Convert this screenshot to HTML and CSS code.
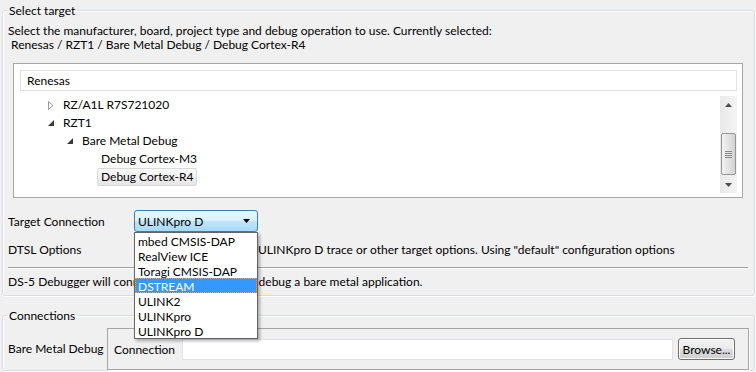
FILE: index.html
```html
<!DOCTYPE html>
<html lang="en">
<head>
  <meta charset="UTF-8" />
  <title>Debug Configuration - Connection</title>
  <link rel="stylesheet" href="styles.css">
</head>
<body>
  <fieldset class="group target">
    <legend>Select target</legend>
    <p>Select the manufacturer, board, project type and debug operation to use. Currently selected:</p>
    <p class="current">&nbsp;Renesas / RZT1 / Bare Metal Debug / Debug Cortex-R4</p>

    <div class="tree-box">
      <div class="filter">Renesas</div>
      <div class="tree-area">
        <ul class="tree">
          <li class="lvl1">
            <span class="twisty">
              <svg width="6" height="9" viewBox="0 0 6 9"><path d="M0.5 0.5 L5 4.5 L0.5 8.5 Z" fill="#fff" stroke="#9a9a9a"/></svg>
            </span>
            <span class="label">RZ/A1L R7S721020</span>
          </li>
          <li class="lvl1">
            <span class="twisty">
              <svg width="6" height="6" viewBox="0 0 6 6"><path d="M6 0 L6 6 L0 6 Z" fill="#3a3a3a"/></svg>
            </span>
            <span class="label">RZT1</span>
          </li>
          <li class="lvl2">
            <span class="twisty">
              <svg width="6" height="6" viewBox="0 0 6 6"><path d="M6 0 L6 6 L0 6 Z" fill="#3a3a3a"/></svg>
            </span>
            <span class="label">Bare Metal Debug</span>
          </li>
          <li class="lvl3">
            <span class="twisty"></span>
            <span class="label">Debug Cortex-M3</span>
          </li>
          <li class="lvl3">
            <span class="twisty"></span>
            <span class="label selected">Debug Cortex-R4</span>
          </li>
        </ul>
        <div class="scrollbar">
          <div class="sb-btn">
            <svg width="7" height="4" viewBox="0 0 7 4"><path d="M3.5 0 L7 4 L0 4 Z" fill="#4d4d4d"/></svg>
          </div>
          <div class="sb-track">
            <div class="sb-thumb">
              <span></span><span></span><span></span><span></span>
            </div>
          </div>
          <div class="sb-btn">
            <svg width="7" height="4" viewBox="0 0 7 4"><path d="M0 0 L7 0 L3.5 4 Z" fill="#4d4d4d"/></svg>
          </div>
        </div>
      </div>
    </div>

    <div class="row conn-row">
      <span class="row-label">Target Connection</span>
      <div class="combo-wrap">
        <div class="combo">
          <span>ULINKpro D</span>
          <svg width="7" height="4" viewBox="0 0 7 4"><path d="M0 0 L7 0 L3.5 4 Z" fill="#000"/></svg>
        </div>
        <ul class="combo-list">
          <li>mbed CMSIS-DAP</li>
          <li>RealView ICE</li>
          <li>Toragi CMSIS-DAP</li>
          <li class="hot">DSTREAM</li>
          <li>ULINK2</li>
          <li>ULINKpro</li>
          <li>ULINKpro D</li>
        </ul>
      </div>
    </div>

    <div class="row dtsl-row">
      <span class="row-label">DTSL Options</span>
      <span class="dtsl-text">ULINKpro D trace or other target options. Using "default" configuration options</span>
    </div>

    <hr class="sep">

    <p class="summary">DS-5 Debugger will connect to a <span class="probe">ULINKpro D</span> to debug a bare metal application.</p>
  </fieldset>

  <fieldset class="group connections">
    <legend>Connections</legend>
    <div class="conn-body">
      <span class="conn-label">Bare Metal Debug</span>
      <div class="inner-box">
        <span class="inner-label">Connection</span>
        <div class="text-input"></div>
        <button class="btn">Browse...</button>
      </div>
    </div>
  </fieldset>
</body>
</html>
```

FILE: styles.css
```css
* {
  box-sizing: border-box;
}

html,
body {
  margin: 0;
  padding: 0;
}

body {
  width: 756px;
  height: 372px;
  overflow: hidden;
  background: #f0f0f0;
  font-family: Lato, 'Liberation Sans', sans-serif;
  font-size: 12px;
  color: #000;
}

p {
  margin: 0;
  line-height: 14px;
  white-space: nowrap;
}

/* group boxes */

.group {
  margin: 3px 1px 0 2px;
  padding: 6px 5px 6px 5px;
  border: 1px solid #d5dfe5;
  border-radius: 3px;
  box-shadow: inset 1px 1px 0 #fff, 1px 1px 0 #fff;
  min-width: 0;
}

.group legend {
  margin-left: -1px;
  padding: 0 2px;
  line-height: 15px;
}

.connections {
  margin-top: 12px;
  padding: 5px 5px 0 5px;
}

/* tree */

.tree-box {
  margin: 11px 6px 0 5px;
  height: 135px;
  padding: 6px 5px 4px 6px;
  background: #fff;
  border: 1px solid #a7a7a7;
}

.filter {
  height: 21px;
  line-height: 19px;
  padding-left: 6px;
  border: 1px solid #dfe3e8;
  margin-bottom: 5px;
}

.tree-area {
  display: flex;
  height: 97px;
}

.tree {
  flex: 1;
  list-style: none;
  margin: 0;
  padding: 0;
}

.tree li {
  display: flex;
  align-items: center;
  height: 18px;
}

.tree .lvl1 { padding-left: 23px; }
.tree .lvl2 { padding-left: 42px; }
.tree .lvl3 { padding-left: 61px; }

.twisty {
  width: 16px;
  height: 18px;
  display: flex;
  align-items: center;
  justify-content: center;
}

.label {
  padding: 0 3px;
  line-height: 16px;
  border: 1px solid transparent;
  border-radius: 2px;
}

.label.selected {
  background: linear-gradient(#fafafa, #e6e6e6);
  border-color: #d9d9d9;
}

/* scrollbar */

.scrollbar {
  width: 17px;
  display: flex;
  flex-direction: column;
  background: linear-gradient(90deg, #e8e8e8, #f4f4f4);
}

.sb-btn {
  height: 17px;
  display: flex;
  align-items: center;
  justify-content: center;
}

.sb-track {
  flex: 1;
  display: flex;
  flex-direction: column;
  justify-content: flex-end;
  padding-bottom: 1px;
}

.sb-thumb {
  height: 42px;
  margin: 0 1px;
  border: 1px solid #959595;
  border-radius: 2px;
  background: linear-gradient(90deg, #f3f3f3, #e2e2e2 50%, #d3d3d3);
  display: flex;
  flex-direction: column;
  align-items: center;
  justify-content: center;
  gap: 1px;
}

.sb-thumb span {
  width: 7px;
  height: 1px;
  background: #8a8a8a;
}

/* rows */

.row {
  display: flex;
  align-items: center;
}

.row-label {
  width: 126px;
  flex-shrink: 0;
  line-height: 15px;
}

.conn-row {
  margin-top: 12px;
  height: 22px;
}

.combo-wrap {
  position: relative;
  width: 124px;
  height: 22px;
}

.combo {
  height: 22px;
  display: flex;
  align-items: center;
  justify-content: space-between;
  padding: 0 7px 0 3px;
  border: 1px solid #3c7fb1;
  border-radius: 3px;
  background: linear-gradient(#eaf6fd, #d9f0fc 50%, #bee6fd 50%, #a7d9f5);
}

.combo-list {
  position: absolute;
  top: 22px;
  left: 0;
  width: 124px;
  margin: 0;
  padding: 0;
  list-style: none;
  background: #fff;
  border: 1px solid #646464;
  box-shadow: 2px 2px 3px rgba(0, 0, 0, 0.3);
  z-index: 2;
}

.combo-list li {
  height: 15px;
  line-height: 15px;
  padding-left: 2px;
  border: 1px solid transparent;
  white-space: nowrap;
}

.combo-list li.hot {
  background: #3399ff;
  color: #fff;
  border: 1px dotted #e8a050;
}

.dtsl-row {
  margin-top: 10px;
  white-space: nowrap;
}

.dtsl-text {
  line-height: 15px;
  margin-left: 124px;
}

.sep {
  margin: 10px 1px 0 0;
  height: 0;
  border: 0;
  border-top: 1px solid #a0a0a0;
  border-bottom: 1px solid #fff;
}

.summary {
  margin-top: 6px;
}

.summary .probe {
  letter-spacing: -0.6px;
}

/* connections */

.conn-body {
  display: flex;
  align-items: flex-start;
}

.conn-label {
  width: 99px;
  flex-shrink: 0;
  line-height: 15px;
  margin-top: 13px;
}

.inner-box {
  flex: 1;
  display: flex;
  align-items: center;
  gap: 5px;
  padding: 9px 13px 9px 6px;
  border: 1px solid #a5a5a5;
  box-shadow: 1px 1px 0 #fff;
}

.inner-label {
  width: 63px;
  line-height: 15px;
}

.text-input {
  flex: 1;
  height: 21px;
  background: #fff;
  border: 1px solid #dfe3e8;
}

.btn {
  width: 57px;
  height: 22px;
  padding: 0;
  font: inherit;
  color: #000;
  border: 1px solid #707070;
  border-radius: 3px;
  background: linear-gradient(#f2f2f2, #ebebeb 50%, #dddddd 50%, #cfcfcf);
  box-shadow: inset 0 0 0 1px #fcfcfc;
}
```
